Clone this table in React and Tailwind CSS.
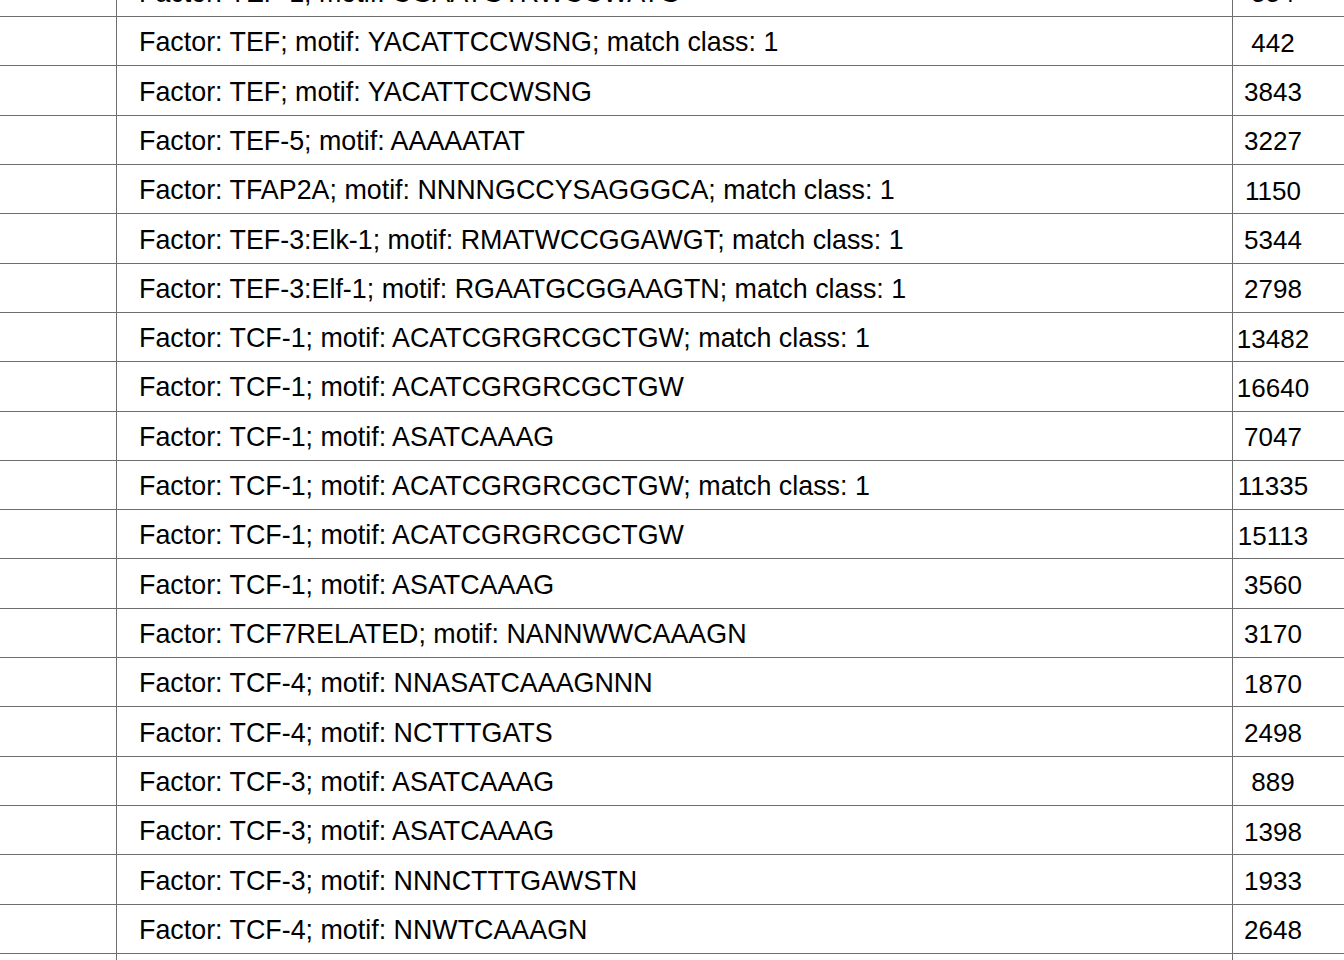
const rows = [
  ['Factor: TEF-1; motif: CGAATGTRWCCWATG', '554'],
  ['Factor: TEF; motif: YACATTCCWSNG; match class: 1', '442'],
  ['Factor: TEF; motif: YACATTCCWSNG', '3843'],
  ['Factor: TEF-5; motif: AAAAATAT', '3227'],
  ['Factor: TFAP2A; motif: NNNNGCCYSAGGGCA; match class: 1', '1150'],
  ['Factor: TEF-3:Elk-1; motif: RMATWCCGGAWGT; match class: 1', '5344'],
  ['Factor: TEF-3:Elf-1; motif: RGAATGCGGAAGTN; match class: 1', '2798'],
  ['Factor: TCF-1; motif: ACATCGRGRCGCTGW; match class: 1', '13482'],
  ['Factor: TCF-1; motif: ACATCGRGRCGCTGW', '16640'],
  ['Factor: TCF-1; motif: ASATCAAAG', '7047'],
  ['Factor: TCF-1; motif: ACATCGRGRCGCTGW; match class: 1', '11335'],
  ['Factor: TCF-1; motif: ACATCGRGRCGCTGW', '15113'],
  ['Factor: TCF-1; motif: ASATCAAAG', '3560'],
  ['Factor: TCF7RELATED; motif: NANNWWCAAAGN', '3170'],
  ['Factor: TCF-4; motif: NNASATCAAAGNNN', '1870'],
  ['Factor: TCF-4; motif: NCTTTGATS', '2498'],
  ['Factor: TCF-3; motif: ASATCAAAG', '889'],
  ['Factor: TCF-3; motif: ASATCAAAG', '1398'],
  ['Factor: TCF-3; motif: NNNCTTTGAWSTN', '1933'],
  ['Factor: TCF-4; motif: NNWTCAAAGN', '2648'],
  ['Factor: TCF-4; motif: NNASATCAAAGNNN', '1204'],
]

export default function App() {
  return (
    <div className="h-screen overflow-hidden bg-white text-black" style={{ fontFamily: '"Liberation Sans", Arial, sans-serif' }}>
      <div className="-mt-[32.3px]">
        {rows.map(([label, count], i) => (
          <div key={i} className="flex h-[49.32px] border-b border-[#6f6f6f] leading-none">
            <div className="w-[117px] shrink-0 border-r border-[#6f6f6f]" />
            <div className="w-[1116px] shrink-0 flex items-center pl-[22px] pt-[3px] border-r border-[#6f6f6f] whitespace-nowrap text-[26.85px]">
              {label}
            </div>
            <div className="w-[80px] shrink-0 flex items-center justify-center pt-[3px] whitespace-nowrap text-[26px]">
              {count}
            </div>
          </div>
        ))}
      </div>
    </div>
  )
}
